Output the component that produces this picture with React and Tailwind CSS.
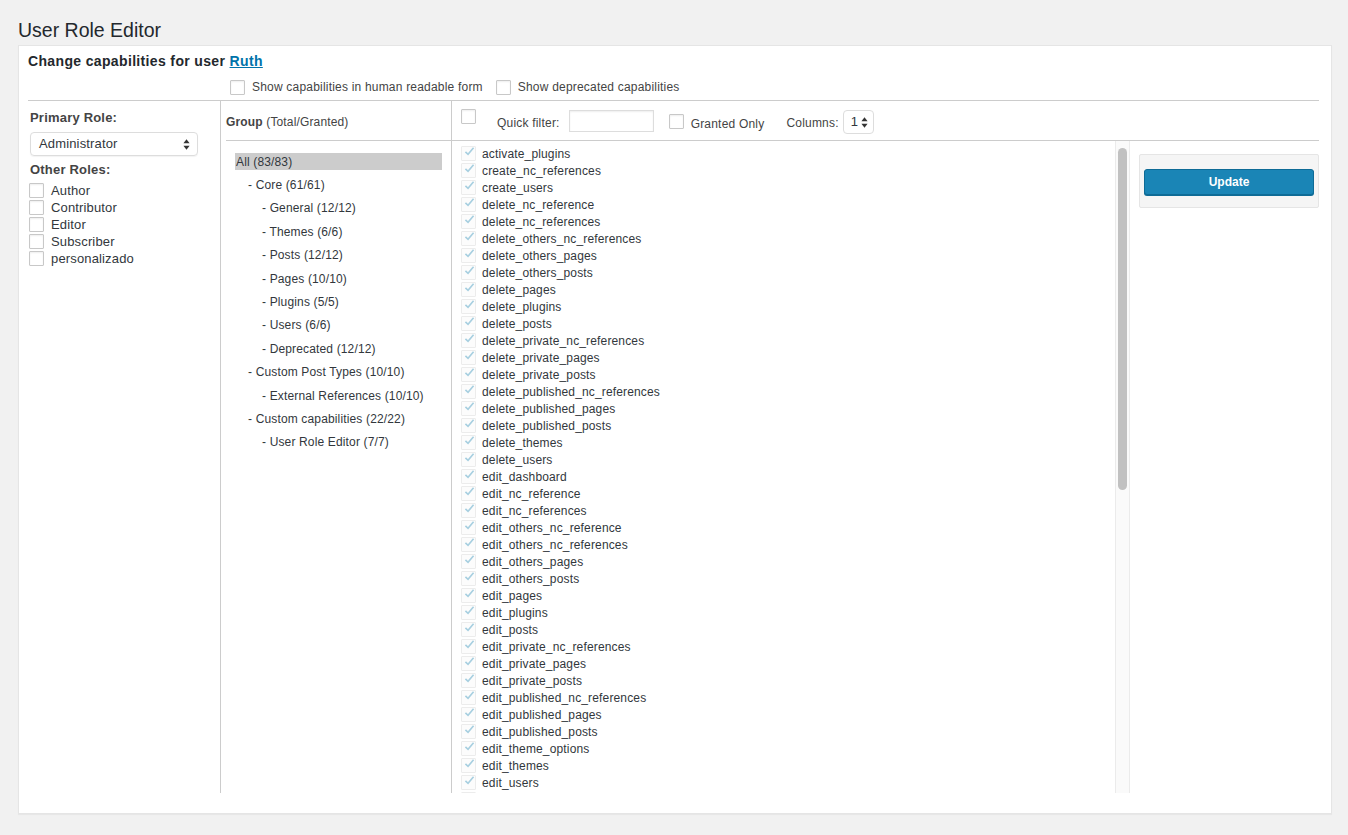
import { useState } from 'react';

const caps = [
    'activate_plugins', 'create_nc_references', 'create_users', 'delete_nc_reference', 'delete_nc_references',
    'delete_others_nc_references', 'delete_others_pages', 'delete_others_posts', 'delete_pages', 'delete_plugins',
    'delete_posts', 'delete_private_nc_references', 'delete_private_pages', 'delete_private_posts',
    'delete_published_nc_references', 'delete_published_pages', 'delete_published_posts', 'delete_themes',
    'delete_users', 'edit_dashboard', 'edit_nc_reference', 'edit_nc_references', 'edit_others_nc_reference',
    'edit_others_nc_references', 'edit_others_pages', 'edit_others_posts', 'edit_pages', 'edit_plugins',
    'edit_posts', 'edit_private_nc_references', 'edit_private_pages', 'edit_private_posts',
    'edit_published_nc_references', 'edit_published_pages', 'edit_published_posts', 'edit_theme_options',
    'edit_themes', 'edit_users',
];

const groups = [
    { label: 'All (83/83)', level: 0 },
    { label: '- Core (61/61)', level: 1 },
    { label: '- General (12/12)', level: 2 },
    { label: '- Themes (6/6)', level: 2 },
    { label: '- Posts (12/12)', level: 2 },
    { label: '- Pages (10/10)', level: 2 },
    { label: '- Plugins (5/5)', level: 2 },
    { label: '- Users (6/6)', level: 2 },
    { label: '- Deprecated (12/12)', level: 2 },
    { label: '- Custom Post Types (10/10)', level: 1 },
    { label: '- External References (10/10)', level: 2 },
    { label: '- Custom capabilities (22/22)', level: 1 },
    { label: '- User Role Editor (7/7)', level: 2 },
];

const Box = ({ className = '' }) => (
    <span className={`inline-block w-[15px] h-[15px] border border-[#c8c8c8] bg-white rounded-[1px] shadow-[inset_0_1px_2px_rgba(0,0,0,0.07)] shrink-0 ${className}`} />
);

const CheckedBox = () => (
    <span className="relative inline-block w-[15px] h-[15px] border border-[#ececec] bg-[#fcfcfc] rounded-[1px] shrink-0">
        <svg viewBox="0 0 16 16" className="absolute -top-[2px] left-[1px] w-[13px] h-[13px]">
            <path d="M3 8.5 L6.2 11.5 L13 3.5" fill="none" stroke="#a7cfe0" strokeWidth="2" />
        </svg>
    </span>
);

const Stepper = () => (
    <svg viewBox="0 0 8 12" className="w-[7px] h-[11px]">
        <path d="M4 0 L7.5 4.5 H0.5 Z" fill="#333" />
        <path d="M4 12 L7.5 7.5 H0.5 Z" fill="#333" />
    </svg>
);

const App = () => {
    const [filter, setFilter] = useState('');

    return (
        <div className="h-[835px] bg-[#f1f1f1] pl-[18px] pr-[16px] text-[#32373c] font-['Liberation_Sans',Arial,sans-serif] overflow-hidden">
            <h1 className="pt-[17px] text-[19.5px] leading-[26px] text-[#23282d]">User Role Editor</h1>

            {/* Main box */}
            <div className="mt-[2px] h-[769px] bg-white border border-[#e5e5e5] shadow-[0_1px_1px_rgba(0,0,0,0.04)] pl-[9px] pr-[12px] flex flex-col">
                <div className="pt-[6px] text-[14px] leading-[18px] font-bold tracking-[0.35px] text-[#23282d]">
                    Change capabilities for user <a className="text-[#0073aa] underline">Ruth</a>
                </div>
                <div className="mt-[9px] pl-[202px] flex items-center h-[16px] text-[12px] tracking-[0.2px] text-[#444]">
                    <Box />
                    <span className="ml-[7px]">Show capabilities in human readable form</span>
                    <Box className="ml-[13px]" />
                    <span className="ml-[7px]">Show deprecated capabilities</span>
                </div>
                <div className="mt-[5px] border-t border-[#ccc]" />

                <div className="flex flex-1 min-h-0 pb-[20px]">
                    {/* Roles */}
                    <div className="w-[193px] border-r border-[#ccc] pl-[2px] pt-[9px]">
                        <div className="text-[13px] leading-[16px] font-bold tracking-[0.2px] text-[#444]">Primary Role:</div>
                        <div className="mt-[6px] w-[168px] h-[24px] border border-[#ddd] rounded-[4px] shadow-[0_1px_1px_rgba(0,0,0,0.05)] flex items-center justify-between pl-[8px] pr-[7px] text-[13px] tracking-[0.15px] text-[#32373c]">
                            <span>Administrator</span>
                            <Stepper />
                        </div>
                        <div className="mt-[6px] text-[13px] leading-[16px] font-bold tracking-[0.2px] text-[#444]">Other Roles:</div>
                        <div className="mt-[4px]">
                            {['Author', 'Contributor', 'Editor', 'Subscriber', 'personalizado'].map((r) => (
                                <div key={r} className="h-[17px] flex items-center text-[13px] tracking-[0.15px] text-[#32373c]">
                                    <Box className="-ml-[1px]" />
                                    <span className="ml-[7px]">{r}</span>
                                </div>
                            ))}
                        </div>
                    </div>

                    {/* Groups */}
                    <div className="w-[231px] border-r border-[#ccc] pl-[5px]">
                        <div className="h-[40px] border-b border-[#ccc] flex items-center pt-[2px] text-[12px] tracking-[0.15px] text-[#444]">
                            <span className="font-bold">Group</span>&nbsp;(Total/Granted)
                        </div>
                        <div className="pt-[9px] pl-[9px] pr-[9px]">
                            {groups.map((g, i) => (
                                <div key={g.label} className="h-[23.4px] flex items-center">
                                    <div
                                        className={`h-[17px] w-full flex items-center text-[12px] tracking-[0.15px] text-[#32373c] ${i === 0 ? 'bg-[#cccccc] pl-[1px]' : ''} ${g.level === 1 ? 'pl-[13px]' : ''} ${g.level === 2 ? 'pl-[27px]' : ''}`}
                                    >
                                        {g.label}
                                    </div>
                                </div>
                            ))}
                        </div>
                    </div>

                    {/* Capabilities */}
                    <div className="flex-1 flex flex-col min-w-0">
                        <div className="h-[40px] border-b border-[#ccc] flex items-start pl-[9px] text-[12px] tracking-[0.2px] text-[#444]">
                            <Box className="mt-[8px]" />
                            <span className="ml-[21px] mt-[13px]">Quick filter:</span>
                            <input
                                value={filter}
                                onChange={(e) => setFilter(e.target.value)}
                                className="ml-[9px] mt-[9px] w-[85px] h-[22px] border border-[#ddd] shadow-[inset_0_1px_2px_rgba(0,0,0,0.07)] outline-none px-[4px] text-[12px]"
                            />
                            <Box className="ml-[15px] mt-[13px]" />
                            <span className="ml-[7px] mt-[14px]">Granted Only</span>
                            <span className="ml-[22px] mt-[13px]">Columns:</span>
                            <div className="ml-[4px] mt-[9px] w-[31px] h-[24px] border border-[#ddd] rounded-[4px] flex items-center justify-between pl-[7px] pr-[5px] text-[13px] text-[#32373c]">
                                <span>1</span>
                                <Stepper />
                            </div>
                        </div>

                        <div className="flex flex-1 min-h-0">
                            <div className="flex-1 overflow-hidden pl-[9px] pt-[4px]">
                                {caps.map((c) => (
                                    <div key={c} className="h-[17px] flex items-center text-[12px] tracking-[0.15px] text-[#32373c]">
                                        <CheckedBox />
                                        <span className="ml-[6px]">{c}</span>
                                    </div>
                                ))}
                                <div className="h-[17px] flex items-center">
                                    <CheckedBox />
                                </div>
                            </div>
                            {/* scrollbar */}
                            <div className="w-[15px] border-l border-r border-[#ebebeb] bg-[#fafafa] pt-[7px] flex justify-center">
                                <div className="w-[9px] h-[342px] rounded-full bg-[#c1c1c1]" />
                            </div>
                            <div className="w-[189px] pl-[9px] pt-[13px]">
                                <div className="h-[54px] bg-[#f5f5f5] border border-[#e5e5e5] rounded-[2px] px-[4px] pt-[14px]">
                                    <button className="w-full h-[26px] bg-[#1a85b6] border border-[#0e6b96] rounded-[3px] shadow-[0_1px_0_#0e6b96] text-white text-[12px] font-bold">
                                        Update
                                    </button>
                                </div>
                            </div>
                        </div>
                    </div>
                </div>
            </div>
        </div>
    );
};

export default App;
